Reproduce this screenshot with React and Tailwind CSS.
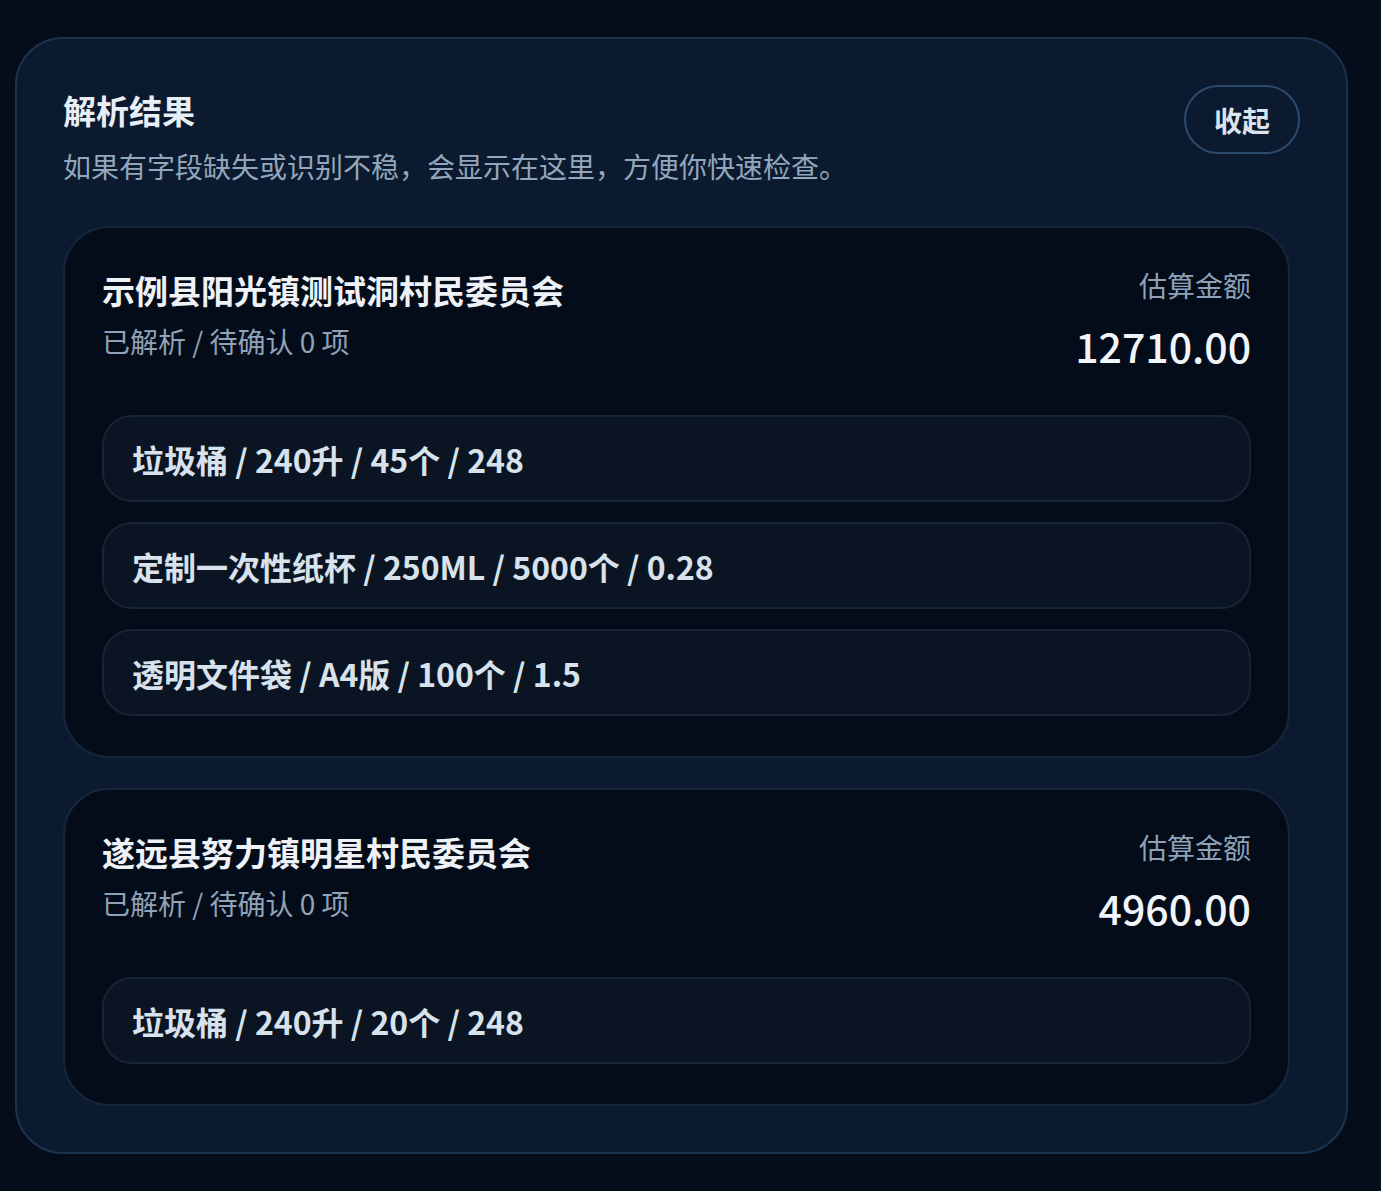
const groups = [
    {
        name: '示例县阳光镇测试洞村民委员会',
        status: '已解析 / 待确认 0 项',
        amount: '12710.00',
        items: ['垃圾桶 / 240升 / 45个 / 248', '定制一次性纸杯 / 250ML / 5000个 / 0.28', '透明文件袋 / A4版 / 100个 / 1.5'],
    },
    {
        name: '遂远县努力镇明星村民委员会',
        status: '已解析 / 待确认 0 项',
        amount: '4960.00',
        items: ['垃圾桶 / 240升 / 20个 / 248'],
    },
];

function GroupCard ({ group }) {
    return (
        <div className="rounded-[46px] border-2 border-[#15263b] bg-[#040c19] px-[37px] pt-[38px] pb-[40px]">
            <div className="flex items-start justify-between">
                <div className="pt-[2px]">
                    <div className="text-[33px] font-bold leading-[44px] text-[#eef2f7]">{group.name}</div>
                    <div className="mt-[10px] text-[28px] leading-[38px] text-[#8fa2b7]">{group.status}</div>
                </div>
                <div className="text-right">
                    <div className="text-[28px] leading-[38px] text-[#8ea1b8]">估算金额</div>
                    <div className="mt-[15px] text-[41px] font-medium leading-[52px] text-[#f1f5f9]">{group.amount}</div>
                </div>
            </div>

            <div className="mt-[44px] flex flex-col gap-[20px]">
                {group.items.map((item) => (
                    <div
                        key={item}
                        className="flex h-[87px] items-center rounded-[30px] border-2 border-[#172435] bg-[#0b1422] px-[28px] text-[32px] font-semibold text-[#d8e2ec]"
                    >
                        {item}
                    </div>
                ))}
            </div>
        </div>
    );
}

export default function App () {
    return (
        <div
            className="min-h-[1191px] bg-[#050d1b] pl-[15px] pt-[37px]"
            style={{ fontFamily: '"Noto Sans CJK SC", "Noto Sans", sans-serif' }}
        >
            <section className="w-[1333px] rounded-[48px] border-2 border-[#1c3350] bg-[#0b1a2f] px-[46px] pt-[46px] pb-[46px]">
                <div className="flex items-start justify-between">
                    <div>
                        <h2 className="mt-[3px] text-[33px] font-bold leading-[44px] text-[#e8eef5]">解析结果</h2>
                        <p className="mt-[15px] text-[28px] leading-[38px] text-[#93a6bb]">
                            如果有字段缺失或识别不稳，会显示在这里，方便你快速检查。
                        </p>
                    </div>
                    <button className="flex h-[69px] w-[116px] items-center justify-center rounded-full border-2 border-[#2c4a6b] text-[28px] font-semibold text-[#dbe4ee]">
                        收起
                    </button>
                </div>

                <div className="mr-[10px] mt-[41px] flex flex-col gap-[30px]">
                    {groups.map((g) => (
                        <GroupCard key={g.name} group={g} />
                    ))}
                </div>
            </section>
        </div>
    );
}
